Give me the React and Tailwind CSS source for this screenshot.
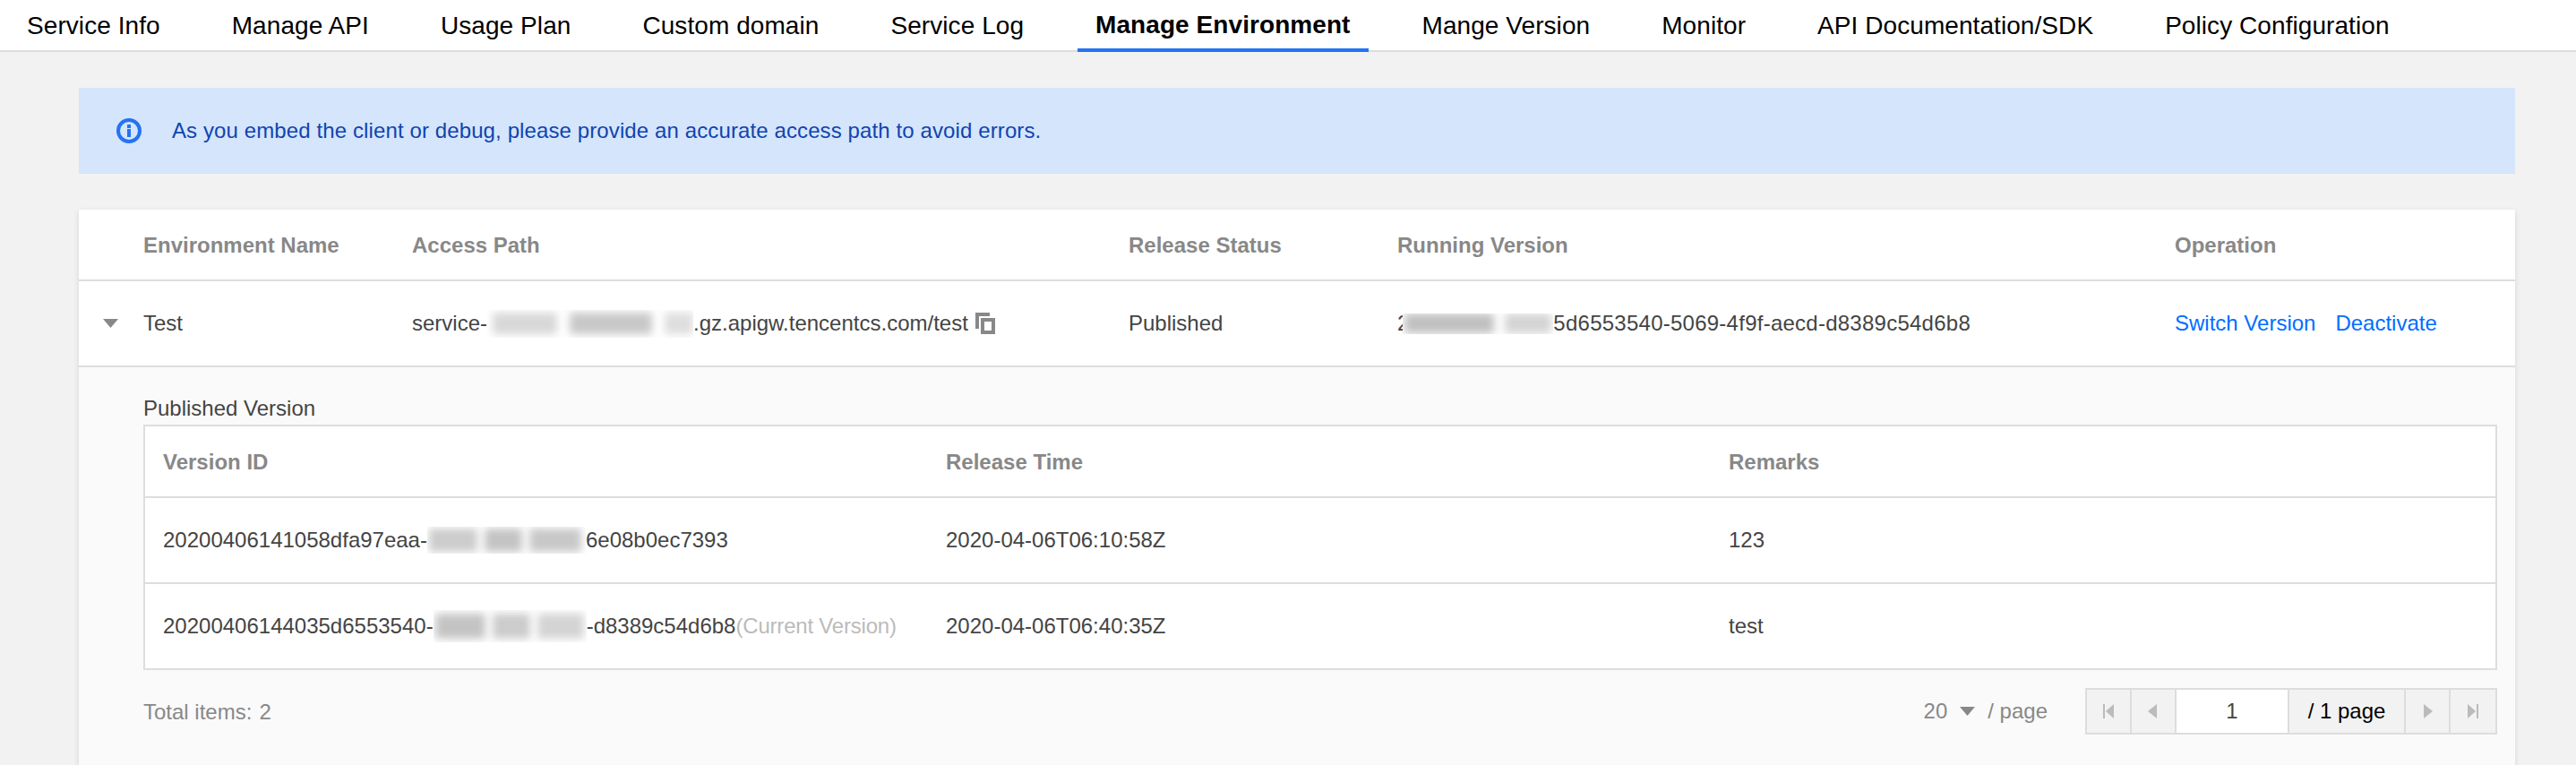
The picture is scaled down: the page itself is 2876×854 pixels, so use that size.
const tabs = [
  "Service Info",
  "Manage API",
  "Usage Plan",
  "Custom domain",
  "Service Log",
  "Manage Environment",
  "Mange Version",
  "Monitor",
  "API Documentation/SDK",
  "Policy Configuration",
];

// masked-out ids in the screenshot: a clipped strip with soft grey smudges
function Blurred({ className, children }) {
  return (
    <span className={`flex shrink-0 items-center overflow-hidden bg-white ${className}`}>
      {children}
    </span>
  );
}

function Smudge({ className }) {
  return <span className={`block shrink-0 blur-[5px] ${className}`} />;
}

function InfoIcon() {
  return (
    <svg width="28" height="28" viewBox="0 0 28 28" className="shrink-0">
      <circle cx="14" cy="14" r="12" fill="none" stroke="#2473f2" strokeWidth="4" />
      <rect x="12" y="7" width="4" height="4" fill="#2473f2" />
      <rect x="12" y="12" width="4" height="9" fill="#2473f2" />
    </svg>
  );
}

function CopyIcon() {
  return (
    <svg width="24" height="26" viewBox="0 0 24 26" className="shrink-0">
      <path d="M0 0h16v4H4v14H0z" fill="#888" />
      <path d="M6 6h16v18H6zM10 10v10h8V10z" fill="#888" fillRule="evenodd" />
    </svg>
  );
}

function Caret({ className }) {
  return (
    <svg width="17" height="10" viewBox="0 0 17 10" className={className}>
      <path d="M0 0h17L8.500 10z" fill="#888" />
    </svg>
  );
}

function PagerButton({ d }) {
  return (
    <div className="flex w-[50px] items-center justify-center border-r-2 border-[#ddd] last:border-r-0">
      <svg width="12" height="16" viewBox="0 0 12 16">
        <path d={d} fill="#bbb" />
      </svg>
    </div>
  );
}

function App() {
  return (
    <div className="h-[854px] w-full overflow-hidden bg-[#f2f2f2] text-[24px] text-[#444] [font-family:'Liberation_Sans',sans-serif]">
      <nav className="flex h-[58px] gap-10 border-b-2 border-[#ddd] bg-white pl-[10px] text-[28px] tracking-[0.07px] text-black">
        {tabs.map((tab) => (
          <div
            key={tab}
            className={`flex h-[58px] items-center px-5 ${
              tab === "Manage Environment" ? "border-b-4 border-[#2473f2] pt-[2px] font-bold" : ""
            }`}
          >
            {tab}
          </div>
        ))}
      </nav>

      <div className="mt-10 mr-[68px] ml-[88px]">
        <div className="flex h-24 items-center gap-[34px] bg-[#d5e5fc] pl-[42px] tracking-[0.11px] text-[#0f44b0]">
          <InfoIcon />
          <span>As you embed the client or debug, please provide an accurate access path to avoid errors.</span>
        </div>

        <div className="mt-10 h-[700px] bg-white shadow-[0_2px_6px_rgba(0,0,0,0.12)]">
          <div className="grid h-[80px] grid-cols-[72px_300px_800px_300px_868px_1fr] items-center border-b-2 border-[#ddd] pt-[2px] font-bold text-[#888]">
            <div />
            <div>Environment Name</div>
            <div>Access Path</div>
            <div>Release Status</div>
            <div>Running Version</div>
            <div>Operation</div>
          </div>

          <div className="grid h-[96px] grid-cols-[72px_300px_800px_300px_868px_1fr] items-center border-b-2 border-[#ddd]">
            <div className="flex justify-center">
              <Caret className="ml-[-2px]" />
            </div>
            <div>Test</div>
            <div className="flex items-center whitespace-nowrap">
              service-
              <Blurred className="h-[31px] w-[230px] gap-[14px] pl-[6px]">
                <Smudge className="h-[24px] w-[72px] bg-[#d8d8d8]" />
                <Smudge className="h-[24px] w-[92px] bg-[#c8c8c8]" />
                <Smudge className="h-[24px] w-[32px] bg-[#dedede]" />
              </Blurred>
              .gz.apigw.tencentcs.com/test
              <span className="mt-[2px] ml-[8px]">
                <CopyIcon />
              </span>
            </div>
            <div>Published</div>
            <div className="flex items-center whitespace-nowrap">
              2
              <Blurred className="ml-[-7px] h-[23px] w-[168px] gap-[12px] pl-[2px]">
                <Smudge className="h-[22px] w-[100px] bg-[#c0c0c0]" />
                <Smudge className="h-[22px] w-[52px] bg-[#d4d4d4]" />
              </Blurred>
              <span className="tracking-[0.25px]">5d6553540-5069-4f9f-aecd-d8389c54d6b8</span>
            </div>
            <div className="flex gap-[22px] text-[#006eff]">
              <span>Switch Version</span>
              <span>Deactivate</span>
            </div>
          </div>

          <div className="h-[444px] bg-[#fafafa] pt-[30px] pr-5 pl-[72px]">
            <div className="leading-[32px]">Published Version</div>

            <div className="mt-[2px] border-2 border-[#ddd] bg-white">
              <div className="grid h-[80px] grid-cols-[874px_874px_1fr] items-center border-b-2 border-[#ddd] pt-[2px] pl-5 font-bold text-[#888]">
                <div>Version ID</div>
                <div>Release Time</div>
                <div>Remarks</div>
              </div>

              <div className="grid h-[96px] grid-cols-[874px_874px_1fr] items-center border-b-2 border-[#ddd] pl-5">
                <div className="flex items-center whitespace-nowrap">
                  20200406141058dfa97eaa-
                  <Blurred className="h-[30px] w-[177px] gap-[8px] pl-[2px]">
                    <Smudge className="h-[26px] w-[54px] bg-[#cccccc]" />
                    <Smudge className="h-[26px] w-[42px] bg-[#c4c4c4]" />
                    <Smudge className="h-[26px] w-[58px] bg-[#c8c8c8]" />
                  </Blurred>
                  6e08b0ec7393
                </div>
                <div>2020-04-06T06:10:58Z</div>
                <div>123</div>
              </div>

              <div className="grid h-[94px] grid-cols-[874px_874px_1fr] items-center pl-5">
                <div className="flex items-center whitespace-nowrap">
                  20200406144035d6553540-
                  <Blurred className="h-[36px] w-[171px] gap-[8px] pl-[2px]">
                    <Smudge className="h-[28px] w-[56px] bg-[#c4c4c4]" />
                    <Smudge className="h-[28px] w-[42px] bg-[#cccccc]" />
                    <Smudge className="h-[28px] w-[52px] bg-[#d4d4d4]" />
                  </Blurred>
                  -d8389c54d6b8
                  <span className="tracking-[-0.2px] text-[#bbb]">(Current Version)</span>
                </div>
                <div>2020-04-06T06:40:35Z</div>
                <div>test</div>
              </div>
            </div>

            <div className="mt-5 flex h-[52px] items-center justify-between text-[#888]">
              <div className="flex gap-2 pt-[2px]">
                <span>Total items:</span>
                <span>2</span>
              </div>

              <div className="flex items-center">
                <span>20</span>
                <Caret className="mx-[14px]" />
                <span className="mr-[42px]">/ page</span>

                <div className="flex h-[52px] border-2 border-[#ddd] bg-[#f2f2f2] text-black">
                  <PagerButton d="M0 0h2v16H0zM12 0v16L3 8z" />
                  <PagerButton d="M10 0v16L0 8z" />
                  <div className="flex w-[126px] items-center justify-center border-r-2 border-[#ddd] bg-white text-[#444]">
                    1
                  </div>
                  <div className="flex w-[130px] items-center justify-center border-r-2 border-[#ddd]">
                    / 1 page
                  </div>
                  <PagerButton d="M2 0v16l10-8z" />
                  <PagerButton d="M0 0v16l9-8zM10 0h2v16h-2z" />
                </div>
              </div>
            </div>
          </div>
        </div>
      </div>
    </div>
  );
}

export default App;
